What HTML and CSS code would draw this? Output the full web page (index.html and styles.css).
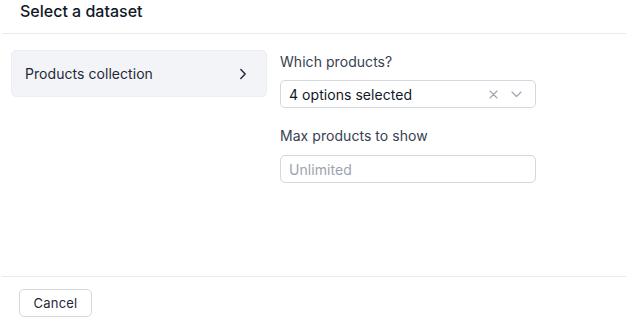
FILE: index.html
```html
<!DOCTYPE html>
<html>
<head>
  <title>Select a dataset</title>
  <link rel="stylesheet" href="styles.css">
</head>
<body>
  <div id="dialog">
    <div class="dialog-header">
      <h2 class="dialog-title">Select a dataset</h2>
    </div>

    <div class="dialog-body">
      <div class="source-list">
        <div class="source-item">
          <span>Products collection</span>
          <svg class="source-chevron" width="8" height="12" viewBox="0 0 8 12" fill="none">
            <path d="M1.8 1.4L6.2 6L1.8 10.6" stroke="#1f2937" stroke-width="1.4" stroke-linecap="round" stroke-linejoin="round"/>
          </svg>
        </div>
      </div>

      <div class="source-options">
        <label class="field-label">Which products?</label>
        <div class="select-box">
          <span class="select-value">4 options selected</span>
          <svg class="select-clear" width="9" height="9" viewBox="0 0 9 9">
            <path d="M1 1L8 8M8 1L1 8" stroke="#9ca3af" stroke-width="1.1" stroke-linecap="round"/>
          </svg>
          <svg class="select-arrow" width="11" height="7" viewBox="0 0 11 7">
            <path d="M1 1L5.5 5.5L10 1" stroke="#9ca3af" stroke-width="1.1" fill="none" stroke-linecap="round" stroke-linejoin="round"/>
          </svg>
        </div>

        <label class="field-label second">Max products to show</label>
        <input type="text" class="text-input" placeholder="Unlimited">
      </div>
    </div>

    <div class="dialog-footer">
      <button class="btn-cancel">Cancel</button>
    </div>
  </div>
</body>
</html>
```

FILE: styles.css
```css
body {
  margin: 0;
  background: #ffffff;
  font-family: Inter, "Noto Sans", sans-serif;
  color: #1f2937;
}
#dialog {
  width: 624px;
  margin-left: 2px;
}
.dialog-header {
  height: 33px;
  padding-left: 18px;
  border-bottom: 1px solid #e9eaee;
}
.dialog-title {
  margin: 0;
  font-size: 16px;
  line-height: 22px;
  font-weight: 500;
  color: #111827;
}
.dialog-body {
  display: flex;
  gap: 13px;
  height: 226px;
  padding: 16px 0 0 9px;
  border-bottom: 1px solid #e9eaee;
}
.source-list {
  width: 256px;
}
.source-item {
  display: flex;
  align-items: center;
  justify-content: space-between;
  height: 45px;
  padding: 0 19px 0 13px;
  background: #f3f4f7;
  border: 1px solid #eceef2;
  border-radius: 5px;
  font-size: 14px;
  letter-spacing: 0.05px;
  color: #1f2937;
}
.source-options {
  width: 256px;
  padding-top: 2px;
}
.field-label {
  display: block;
  font-size: 14px;
  line-height: 20px;
  letter-spacing: 0.05px;
  color: #374151;
  margin-bottom: 8px;
}
.field-label.second {
  margin-top: 18px;
  margin-bottom: 9px;
}
.select-box {
  display: flex;
  align-items: center;
  box-sizing: border-box;
  height: 28px;
  padding: 0 13px 0 8px;
  border: 1px solid #d4d7de;
  border-radius: 5px;
  font-size: 14px;
  letter-spacing: 0.05px;
  color: #111827;
}
.select-value {
  flex: 1;
}
.select-clear {
  margin-right: 13px;
}
.text-input {
  display: block;
  box-sizing: border-box;
  width: 256px;
  height: 28px;
  margin: 0;
  padding: 0 8px;
  border: 1px solid #d4d7de;
  border-radius: 5px;
  font-family: Inter, "Noto Sans", sans-serif;
  font-size: 14px;
  letter-spacing: 0.05px;
  outline: none;
}
.text-input::placeholder {
  color: #9ca3af;
}
.dialog-footer {
  padding: 12px 0 0 17px;
}
.btn-cancel {
  box-sizing: border-box;
  width: 73px;
  height: 28px;
  padding: 0;
  background: #ffffff;
  border: 1px solid #d4d7de;
  border-radius: 5px;
  font-family: Inter, "Noto Sans", sans-serif;
  font-size: 13px;
  letter-spacing: 0.2px;
  color: #1f2937;
}
```
